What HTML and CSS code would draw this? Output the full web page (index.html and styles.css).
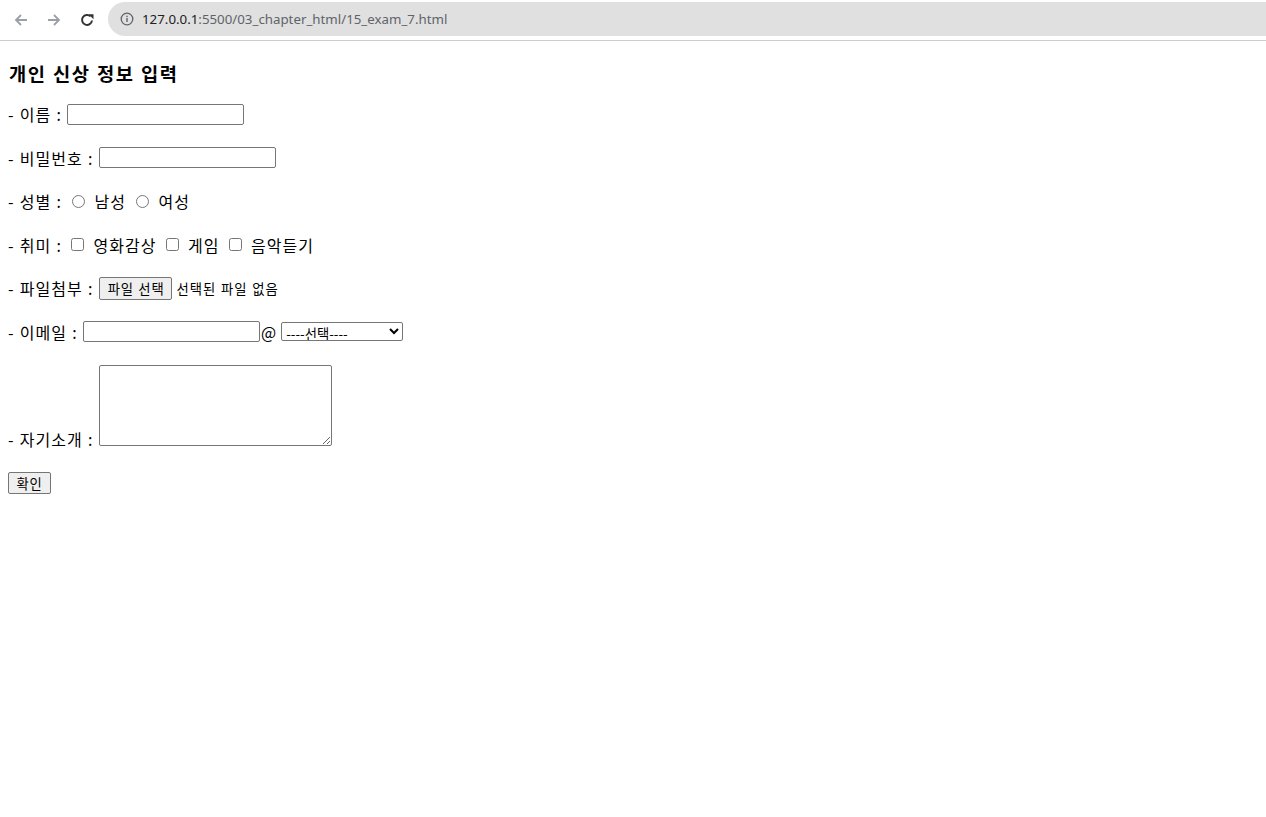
FILE: index.html
```html
<!DOCTYPE html>
<html>

<head>
    <title>15_exam_7</title>

    <link rel="stylesheet" href="styles.css">
</head>

<body>
    <!-- browser toolbar -->
    <div class="toolbar">
        <span class="nav-btn">
            <svg width="16" height="16" viewBox="0 0 16 16"><path d="M14 8H3M8 3L3 8l5 5" fill="none" stroke="#9aa0a6" stroke-width="1.8"/></svg>
        </span>
        <span class="nav-btn">
            <svg width="16" height="16" viewBox="0 0 16 16"><path d="M2 8h11M8 3l5 5-5 5" fill="none" stroke="#9aa0a6" stroke-width="1.8"/></svg>
        </span>
        <span class="nav-btn">
            <svg width="16" height="16" viewBox="0 0 16 16"><path d="M13 8.5A5 5 0 1 1 11.6 4.4" fill="none" stroke="#333" stroke-width="2"/><path d="M9.5 2.2h5v5z" fill="#333"/></svg>
        </span>
        <div class="address">
            <svg class="info" width="14" height="14" viewBox="0 0 14 14"><circle cx="7" cy="7" r="5.8" fill="none" stroke="#5f6368" stroke-width="1.3"/><rect x="6.3" y="6" width="1.4" height="4" fill="#5f6368"/><rect x="6.3" y="3.7" width="1.4" height="1.4" fill="#5f6368"/></svg>
            <span class="host">127.0.0.1</span><span class="path">:5500/03_chapter_html/15_exam_7.html</span>
        </div>
    </div>

    <div class="page">
        <h3>개인 신상 정보 입력</h3>

        <form>
            <p class="row">- 이름 : <input type="text" class="text-box"></p>
            <p class="row">- 비밀번호 : <input type="password" class="text-box"></p>
            <p class="row">- 성별 : <input type="radio" name="gender"> 남성 <input type="radio" name="gender"> 여성</p>
            <p class="row">- 취미 : <input type="checkbox"> 영화감상 <input type="checkbox"> 게임 <input type="checkbox"> 음악듣기</p>
            <p class="row">- 파일첨부 : <span class="file-btn">파일 선택</span><span class="file-name">선택된 파일 없음</span></p>
            <p class="row">- 이메일 : <input type="text" class="text-box"><span class="at">@</span>
                <select class="domain">
                    <option>----선택----</option>
                    <option>naver.com</option>
                    <option>daum.net</option>
                    <option>gmail.com</option>
                </select>
            </p>
            <p class="intro">- 자기소개 : <textarea class="intro-box"></textarea></p>
            <p class="submit"><button type="button" class="ok-btn">확인</button></p>
        </form>
    </div>
</body>

</html>
```

FILE: styles.css
```css
body {
    margin: 0;
    font-family: "Noto Sans CJK KR", "Noto Sans", sans-serif;
    color: #000;
    background-color: #fff;
}

.toolbar {
    height: 40px;
    border-bottom: 1px solid #cdcdcd;
    display: flex;
    align-items: center;
    padding-left: 4px;
}

.nav-btn {
    width: 33px;
    height: 34px;
    display: flex;
    align-items: center;
    justify-content: center;
}

.address {
    flex: 1;
    height: 34px;
    margin-left: 5px;
    margin-top: -2px;
    background-color: #e0e0e0;
    border-radius: 17px 0 0 17px;
    display: flex;
    align-items: center;
    padding-left: 12px;
    font-family: "Noto Sans", sans-serif;
    font-size: 13.3px;
}

.info {
    margin-right: 8px;
}

.host {
    color: #202124;
}

.path {
    color: #5f6368;
}

.page {
    padding: 8px;
}

h3 {
    font-size: 18.72px;
    line-height: 25px;
    letter-spacing: 1.6px;
    word-spacing: 0.5px;
    margin: 10.5px 0 18.5px 1px;
}

.row {
    height: 22px;
    margin: 0 0 21.6px 0;
    display: flex;
    align-items: center;
    font-size: 16px;
    letter-spacing: 1px;
    word-spacing: 0.7px;
    white-space: pre;
}

.text-box {
    box-sizing: border-box;
    width: 177px;
    height: 21px;
    margin: 0;
    border: 1px solid #767676;
    border-radius: 2px;
    padding: 1px 2px;
}

input[type="radio"] {
    width: 13px;
    height: 13px;
    margin: 0 4px 0 5px;
}

input[type="checkbox"] {
    width: 13px;
    height: 13px;
    margin: 0 4px 0 4px;
}

.file-btn {
    box-sizing: border-box;
    height: 23px;
    padding: 0 7px 0 8px;
    border: 1px solid #767676;
    border-radius: 2px;
    background-color: #efefef;
    font-size: 13.33px;
    line-height: 21px;
    letter-spacing: 0.8px;
    margin-right: 4px;
}

.file-name {
    font-size: 13.33px;
    letter-spacing: 1px;
}

.at {
    margin: 0 5px 0 1px;
    letter-spacing: 0;
}

.domain {
    box-sizing: border-box;
    width: 122px;
    height: 19px;
    font-size: 13.33px;
    font-family: "Noto Sans CJK KR", sans-serif;
    border: 1px solid #767676;
    border-radius: 2px;
    padding: 0;
    background-color: #fff;
    margin: 0;
}

.intro {
    margin: 1px 0 0 0;
    font-size: 16px;
    line-height: 22px;
    letter-spacing: 1px;
    word-spacing: 0.7px;
    white-space: pre;
}

.intro-box {
    box-sizing: border-box;
    width: 233px;
    height: 81px;
    margin: 0;
    border: 1px solid #767676;
    border-radius: 2px;
    resize: both;
}

.submit {
    margin: 20px 0 0 0;
}

.ok-btn {
    box-sizing: border-box;
    width: 43px;
    height: 22px;
    padding: 0;
    border: 1px solid #767676;
    border-radius: 2px;
    background-color: #efefef;
    font-family: "Noto Sans CJK KR", sans-serif;
    font-size: 13.33px;
    letter-spacing: 0.8px;
}
```
